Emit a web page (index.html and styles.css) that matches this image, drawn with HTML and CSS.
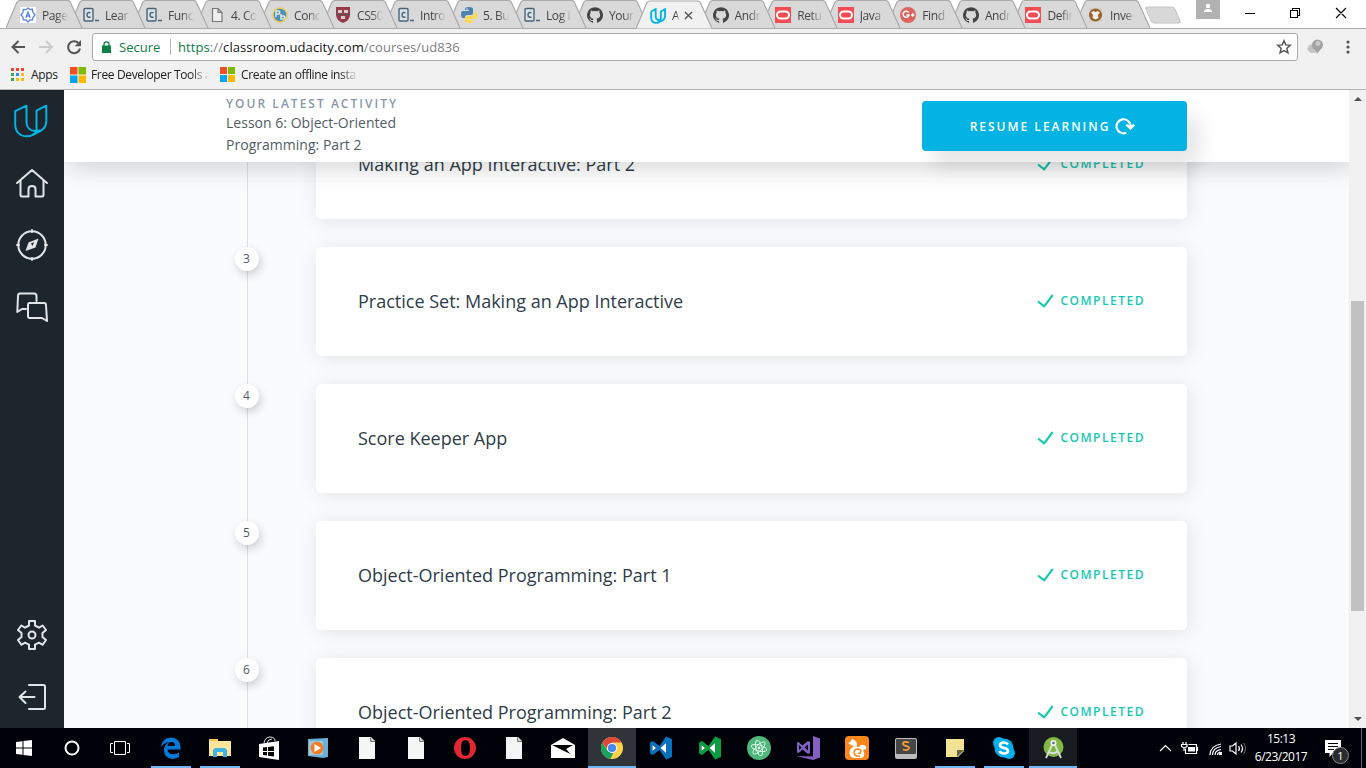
FILE: index.html
```html
<!DOCTYPE html>
<html lang="en">
<head>
<meta charset="utf-8">
<title>Android Basics</title>
<link rel="stylesheet" href="styles.css">
</head>
<body>
<svg class="defs" aria-hidden="true">
  <symbol id="tab" viewBox="0 0 77 28"><path d="M0 28 10.500 3Q11.500.5 14 .5H61.500Q63.500.5 64.500 2.500L76 28" fill="currentColor" stroke="#aaa" stroke-width="1.200"/></symbol>
  <symbol id="code" viewBox="0 0 16 16"><rect x="1" y="1.500" width="9" height="12.500" rx="1" fill="#dce3e6" stroke="#4b6478" stroke-width="1.400"/><path d="M7.500 6Q6.500 5.300 5.500 5.500 4 6 4 7.900T5.500 10.300Q6.500 10.500 7.500 9.800M12 13.500h4" fill="none" stroke="#4b6478" stroke-width="1.500"/></symbol>
  <symbol id="github" viewBox="0 0 16 16"><path fill="#444" d="M8 .2a8 8 0 0 0-2.530 15.590c.4.070.55-.17.55-.38v-1.490c-2.230.48-2.690-.95-2.690-.95-.36-.92-.89-1.170-.89-1.170-.73-.5.060-.49.060-.49.8.06 1.230.83 1.230.83.71 1.220 1.870.87 2.330.66.070-.52.28-.87.5-1.070-1.770-.2-3.640-.89-3.640-3.950 0-.88.32-1.590.83-2.150-.09-.2-.36-1.010.07-2.120 0 0 .68-.21 2.200.82a7.700 7.700 0 0 1 4 0c1.530-1.030 2.200-.82 2.200-.82.44 1.110.16 1.920.08 2.120.51.56.82 1.270.82 2.150 0 3.070-1.870 3.750-3.650 3.950.29.25.54.73.54 1.480v2.200c0 .21.150.46.550.38A8 8 0 0 0 8 .2Z"/></symbol>
  <symbol id="oracle" viewBox="0 0 16 16"><path fill="#f44c52" d="M0 0h16v16H0z"/><rect x="2" y="4.500" width="12" height="7" rx="3.500" fill="none" stroke="#fff" stroke-width="2"/></symbol>
  <symbol id="udacity" viewBox="0 0 34 34"><path d="M1.200 7.200V20C1.200 28 6 32.300 12.500 32.300Q16 32.300 19 30.800L27.500 26.300Q32.300 23 32.300 17V1.700L22.500 6.700V26.500M1.200 7.200 12.500 1.700V18.500Q13.200 26.300 20.500 27Q24 27 27.500 26.300M18.500 31Q22.500 29 22.500 26.500" fill="none" stroke="#02b3e4" stroke-width="2" stroke-linejoin="round"/></symbol>
  <symbol id="ms" viewBox="0 0 16 16"><path fill="#f25022" d="M0 0h7.500v7.500H0z"/><path fill="#7fba00" d="M8.500 0H16v7.500H8.500z"/><path fill="#00a4ef" d="M0 8.500h7.500V16H0z"/><path fill="#ffb900" d="M8.500 8.500H16V16H8.500z"/></symbol>
  <symbol id="check" viewBox="0 0 18 14"><path d="M1 7.500 7.200 12.300 15.700 1" fill="none" stroke="#15c8b4" stroke-width="2.100" stroke-linejoin="round"/></symbol>
  <symbol id="file" viewBox="0 0 16 22"><path fill="#f4f5f5" d="M0 0h12l4 4v18H0z"/><path d="M11.500.5v4H16" fill="#ccc" stroke="#777"/></symbol>
  <symbol id="vs" viewBox="0 0 24 24"><path fill="currentColor" fill-rule="evenodd" d="M1 6.500 4 5l6.500 5L17 .5l6 2.500v18L17 23.500 10.500 14 4 19l-3-1.500zM17 7l-5.500 5L17 17zM3.500 9v6L7 12z"/><path fill="#fff" d="M17 7v10l-5.500-5zM3.500 9v6L7 12z"/></symbol>
</svg>

<header class="browser">
  <div class="tabs">
    <div class="tab" style="z-index:18"><svg class="shape"><use href="#tab"/></svg><svg class="fav" viewBox="0 0 16 16"><path fill="#fff" d="M0 0h16v16H0z"/><path d="M8 1 10 2.500l2.500-.2.300 2.700L15 8l-2 2.500-.5 2.300-2.500.2-2 2-2-2-2.700-.2-.3-2.500L1 8l2-2.700.3-2.800 2.700.2zM5.800 10.800 8 5l2.200 5.800M6.500 9h3" fill="none" stroke="#5b83e0" stroke-width="1.300"/></svg><span>Page</span></div>
    <div class="tab" style="z-index:17"><svg class="shape"><use href="#tab"/></svg><svg class="fav"><use href="#code"/></svg><span>Lear</span></div>
    <div class="tab" style="z-index:16"><svg class="shape"><use href="#tab"/></svg><svg class="fav"><use href="#code"/></svg><span>Func</span></div>
    <div class="tab" style="z-index:15"><svg class="shape"><use href="#tab"/></svg><svg class="fav" viewBox="0 0 16 16"><path d="M3.500 1.500H9l4 4v9H3.500zM9 1.500v4h4" fill="#eee" stroke="#777" stroke-width="1.200"/></svg><span>4. Co</span></div>
    <div class="tab" style="z-index:14"><svg class="shape"><use href="#tab"/></svg><svg class="fav" viewBox="0 0 16 16"><circle cx="8" cy="8" r="7" fill="#4f8fc0" stroke="#e9cc55" stroke-width="1.500"/><path d="M4 10V4h3q1.500 1.500 0 3H4M9 7v5h3q1.500-1.500 0-3H9" fill="none" stroke="#dfe9e5" stroke-width="1.500"/></svg><span>Conc</span></div>
    <div class="tab" style="z-index:13"><svg class="shape"><use href="#tab"/></svg><svg class="fav" viewBox="0 0 16 16"><path fill="#963b45" d="M1 0h14v8q0 5-7 8-7-3-7-8z"/><path fill="#d8cccc" d="M3 3h4v3H3zm6 0h4v3H9zM6 9h4v3H6z"/><path d="M1 7.500h14" stroke="#555"/></svg><span>CS50</span></div>
    <div class="tab" style="z-index:12"><svg class="shape"><use href="#tab"/></svg><svg class="fav"><use href="#code"/></svg><span>Intro</span></div>
    <div class="tab" style="z-index:11"><svg class="shape"><use href="#tab"/></svg><svg class="fav" viewBox="0 0 16 16"><path fill="#4c83b1" d="M4 4V2q0-2 4-2t4 2v4q0 2-2 2H6Q4 8 4 11H2q-2 0-2-4 0-3 2-3h6V3H4z"/><path fill="#ffd756" d="M12 12v2q0 2-4 2t-4-2v-3q0-2 2-2h4q3 0 3-4h1q2 0 2 4 0 3-2 3H8v1h4z"/><circle cx="6" cy="2" r=".7" fill="#fff"/></svg><span>5. Bu</span></div>
    <div class="tab" style="z-index:10"><svg class="shape"><use href="#tab"/></svg><svg class="fav"><use href="#code"/></svg><span>Log i</span></div>
    <div class="tab" style="z-index:9"><svg class="shape"><use href="#tab"/></svg><svg class="fav"><use href="#github"/></svg><span>Your</span></div>
    <div class="tab active" style="z-index:20"><svg class="shape"><use href="#tab"/></svg><svg class="fav" viewBox="0 0 34 34"><path d="M2.500 7.500V20C2.500 27 7 31.500 13.500 31.500Q17 31.500 20 29.500L28 25.500Q32 22 32 17V2.500L23 7.500V20M2.500 7.500 12 2.500V19Q13 26 19 26 23 25 23 20" fill="none" stroke="#02b3e4" stroke-width="4"/></svg><span>A</span><svg class="close" viewBox="0 0 10 10"><path d="m1 1 8 8M9 1 1 9" stroke="#555" stroke-width="1.600"/></svg></div>
    <div class="tab" style="z-index:7"><svg class="shape"><use href="#tab"/></svg><svg class="fav"><use href="#github"/></svg><span>Andr</span></div>
    <div class="tab" style="z-index:6"><svg class="shape"><use href="#tab"/></svg><svg class="fav"><use href="#oracle"/></svg><span>Retu</span></div>
    <div class="tab" style="z-index:5"><svg class="shape"><use href="#tab"/></svg><svg class="fav"><use href="#oracle"/></svg><span>Java</span></div>
    <div class="tab" style="z-index:4"><svg class="shape"><use href="#tab"/></svg><svg class="fav" viewBox="0 0 16 16"><circle cx="8" cy="8" r="8" fill="#dd645c"/><path d="M8.700 5.700A3 3 0 1 0 9 8H6.200M11 8h3.400M12.700 6.300v3.400" fill="none" stroke="#fff" stroke-width="1.400"/></svg><span>Find</span></div>
    <div class="tab" style="z-index:3"><svg class="shape"><use href="#tab"/></svg><svg class="fav"><use href="#github"/></svg><span>Andr</span></div>
    <div class="tab" style="z-index:2"><svg class="shape"><use href="#tab"/></svg><svg class="fav"><use href="#oracle"/></svg><span>Defin</span></div>
    <div class="tab" style="z-index:1"><svg class="shape"><use href="#tab"/></svg><svg class="fav" viewBox="0 0 16 16"><path fill="#d5cfc6" d="M1 1h13v14H1z"/><circle cx="7.500" cy="8" r="6.500" fill="#986332"/><path fill="#f5eee6" d="M3 5.500 5.500 4 7.500 5 9.500 4 12 5.500 10 8l.5 3-3 1.500L4.500 11 5 8z"/></svg><span>Inve</span></div>
    <svg class="newtab" viewBox="0 0 36 18"><path d="M1 1h26q2 0 3 2l5 12q1 2-1 2H9q-2 0-3-2L1 3Q0 1 1 1Z" fill="#d8d8d8" stroke="#c4c4c4"/></svg>
    <svg class="profile" viewBox="0 0 24 19"><path fill="#b1b1b1" d="M0 0h24v19H0z"/><circle cx="12" cy="6" r="2.200" fill="#fff"/><path fill="#fff" d="M8 12v-1.200Q8.500 9 12 9t4 1.800V12z"/></svg>
    <svg class="winctl" viewBox="0 0 102 12"><path d="M0 6.500h10M45.500 3.500h7v7h-7zM47.500 3V1.500h7v7H53M91 1l10 10M101 1 91 11" fill="none" stroke="#000" stroke-width="1.100"/></svg>
  </div>
  <div class="toolbar">
    <svg class="nav" viewBox="0 0 74 16"><path d="M15 8H2.500M8.500 2l-6 6 6 6" fill="none" stroke="#555" stroke-width="2"/><path d="M29 8h12M36 2l6 6-6 6" fill="none" stroke="#ccc" stroke-width="2"/><path d="M68.500 4A6 6 0 1 0 70 9.500" fill="none" stroke="#555" stroke-width="2"/><path d="M71 1v6.300h-6.300z" fill="#555"/></svg>
    <div class="omnibox">
      <svg class="lock" viewBox="0 0 9 12"><path fill="#0b8043" d="M0 4.500h9V12H0z"/><path d="M2 5V3.300a2.500 2.500 0 0 1 5 0V5" fill="none" stroke="#0b8043" stroke-width="1.300"/></svg>
      <span class="secure">Secure</span><i></i>
      <span class="url"><em>https</em>://<b>classroom.udacity.com</b>/courses/ud836</span>
      <svg class="star" viewBox="0 0 16 16"><path d="m8 1.800 1.800 4.100 4.500.4-3.400 3 1 4.500L8 11.500l-3.900 2.300 1-4.500-3.400-3 4.500-.4z" fill="none" stroke="#555" stroke-width="1.500"/></svg>
    </div>
    <svg class="ext" viewBox="0 0 18 16"><ellipse cx="6" cy="9.500" rx="5.500" ry="4.500" fill="#c4c4c4"/><path fill="#a2a2a2" d="M5 6A5.500 5.500 0 0 1 16 6q0 3-3 5l-3 4q0-3-3-5-2-1-2-4z"/><circle cx="11" cy="4.500" r="2.500" fill="#c9c9c9"/></svg>
    <svg class="more" viewBox="0 0 4 14"><g fill="#555"><circle cx="2" cy="2" r="1.600"/><circle cx="2" cy="7" r="1.600"/><circle cx="2" cy="12" r="1.600"/></g></svg>
  </div>
  <div class="bookmarks">
    <svg class="apps" viewBox="0 0 13 13"><path fill="#ea4335" d="M0 0h3v3H0zM5 0h3v3H5zM10 0h3v3h-3z"/><path fill="#34a853" d="M0 5h3v3H0zM0 10h3v3H0z"/><path fill="#4285f4" d="M5 5h3v3H5z"/><path fill="#fbbc05" d="M10 5h3v3h-3zM5 10h3v3H5zM10 10h3v3h-3z"/></svg>
    <span class="apps-label">Apps</span>
    <svg class="bm"><use href="#ms"/></svg><span class="fade one">Free Developer Tools a</span>
    <svg class="bm small"><use href="#ms"/></svg><span class="fade two">Create an offline insta</span>
  </div>
</header>

<div class="page">
  <nav class="sidebar">
    <svg class="logo"><use href="#udacity"/></svg>
    <svg viewBox="0 0 32 32"><path d="M1 16 16 3l15 13M4.500 13.500V28q0 1.500 1.500 1.500h6.500V22q0-3 3.500-3t3.500 3v7.500H26q1.500 0 1.500-1.500V13.500"/></svg>
    <svg viewBox="0 0 32 32"><circle cx="16" cy="16" r="13.700"/><path d="M16 1v2M16 29v2M1 16h2M29 16h2"/><path class="solid" fill-rule="evenodd" d="m9.500 22 3-8.500 10-4-3 9zM15 14.500 16.500 17l1.500-4z"/></svg>
    <svg viewBox="0 0 32 32"><path d="M20.500 10V5Q20.500 2.500 18 2.500H4Q2 2.500 2 5L1.300 21 6 18h4"/><path d="M13.500 12H28Q30 12 30 14L31 30l-5-3H13.500q-1.500 0-1.500-2V14q0-2 1.500-2z"/></svg>
    <svg class="gear" viewBox="0 0 32 32"><path d="M13 2h6v4.500l4 2.200 3.700-2.200 3.300 4.500-3.500 3v4l3.500 3-3.300 4.800L23 23.700l-4 2V30h-6v-4.300l-4-2-3.700 2.100L2 21l3.500-3v-4L2 11l3.300-4.500L9 8.700l4-2.200z"/><circle cx="16" cy="16" r="3.500"/></svg>
    <svg viewBox="0 0 32 32"><path d="M13 4h14.500q1.500 0 1.500 1.500v21q0 1.500-1.500 1.500H13M18.500 16H3.500M9.500 10.500 3.500 16l6 6"/></svg>
  </nav>
  <main class="content">
    <div class="activity">
      <div class="latest"><h2>YOUR LATEST ACTIVITY</h2><p>Lesson 6: Object-Oriented<br>Programming: Part 2</p></div>
      <button class="resume"><span>RESUME LEARNING</span><svg viewBox="0 0 20 18"><path d="M11.300 15.700A7 7 0 1 1 15.500 9" fill="none" stroke="#fff" stroke-width="2.200"/><path d="m10.500 8.500 5 4.500L20 8.500 18.500 7l-3 2-3.500-2z" fill="#fff"/></svg></button>
    </div>
    <ol class="lessons">
      <li><b></b><article><h3>Making an App Interactive: Part 2</h3><span class="done"><svg><use href="#check"/></svg>COMPLETED</span></article></li>
      <li><b>3</b><article><h3>Practice Set: Making an App Interactive</h3><span class="done"><svg><use href="#check"/></svg>COMPLETED</span></article></li>
      <li><b>4</b><article><h3>Score Keeper App</h3><span class="done"><svg><use href="#check"/></svg>COMPLETED</span></article></li>
      <li><b>5</b><article><h3>Object-Oriented Programming: Part 1</h3><span class="done"><svg><use href="#check"/></svg>COMPLETED</span></article></li>
      <li><b>6</b><article><h3>Object-Oriented Programming: Part 2</h3><span class="done"><svg><use href="#check"/></svg>COMPLETED</span></article></li>
    </ol>
  </main>
  <div class="scrollbar">
    <svg viewBox="0 0 8 4"><path d="M0 4 4 0l4 4z" fill="#505050"/></svg>
    <div class="thumb"></div>
    <svg viewBox="0 0 8 4"><path d="M0 0h8L4 4z" fill="#505050"/></svg>
  </div>
</div>

<footer class="taskbar">
  <div class="start"><svg width="16" height="16" viewBox="0 0 16 16"><path fill="#fff" d="m0 2 6.500-.8v6.300H0zM7.500 1 16 0v7.500H7.500zM0 8.500h6.500v6.300L0 14zM7.500 8.500H16V16l-8.500-1z"/></svg></div>
  <div class="start"><svg width="16" height="16" viewBox="0 0 16 16"><circle cx="8" cy="8" r="6.500" fill="none" stroke="#fff" stroke-width="2"/></svg></div>
  <div class="start"><svg width="20" height="14" viewBox="0 0 20 14"><path d="M4.500.5h11v13h-11zM3 2.500H.5v9H3M17 2.500h2.500v9H17" fill="none" stroke="#fff"/></svg></div>
  <div class="app open edge"><svg width="22" height="22" viewBox="0 0 22 22"><path fill="#0078d7" d="M1 10Q2 1 11 .5 20 1 20.500 10v2.500H7.500Q8 17 13 17.200q3.500 0 6-1.700v4.500Q16 22 12 22 4 21 4 13q0-5 5-8Q3.500 6 1 10zm6.500-1H15q0-4-3.500-4T7.500 9z"/></svg></div>
  <div class="app open"><svg width="22" height="20" viewBox="0 0 22 20"><path fill="#f5c84c" d="M0 1h9v4H0z"/><path fill="#ffe59a" d="M0 3h22v15H0z"/><path fill="#3db4e5" d="M4 19v-7l2-2h10l2 2v7h-4v-5H8v5z"/></svg></div>
  <div class="app"><svg width="22" height="24" viewBox="0 0 22 24"><path d="M6 7Q7 1 12 1t5 4M9 7q1-4 5-4" fill="none" stroke="#ddd"/><path fill="#fff" d="m1 8 20-3v19L1 21z"/><path fill="#000" d="m5 11.500 4-.5v4H5zM10 11l6-.8V15h-6zM5 16h4v3.500l-4-.5zM10 16h6v4.500l-6-.8z"/></svg></div>
  <div class="app"><svg width="20" height="20" viewBox="0 0 20 20"><path fill="#69b2d5" d="m0 1 20-1v19l-5 1L0 18z"/><path fill="#a5c6d6" d="M1 3h14v14H1z"/><circle cx="9" cy="10" r="6.300" fill="#f57b22"/><path fill="#fff" d="M6.500 6 13 10l-6.500 4z"/></svg></div>
  <div class="app"><svg width="16" height="22"><use href="#file"/></svg></div>
  <div class="app"><svg width="16" height="22"><use href="#file"/></svg></div>
  <div class="app"><svg width="22" height="22" viewBox="0 0 22 22"><path fill="#e32632" fill-rule="evenodd" d="M11 0a11 11 0 1 0 0 22 11 11 0 1 0 0-22zm.5 3C15 3 16 7 16 11s-1 8-4.500 8S7 15 7 11s1-8 4.500-8z"/></svg></div>
  <div class="app"><svg width="16" height="22"><use href="#file"/></svg></div>
  <div class="app"><svg width="24" height="20" viewBox="0 0 24 20"><path fill="#fff" d="M0 7 12 0l12 7v13H0z"/><path fill="#000" d="M1 7h21l-7 4 4.500 5L11 12z"/></svg></div>
  <div class="app open wide chrome"><svg width="22" height="22" viewBox="0 0 22 22"><circle cx="11" cy="11" r="11" fill="#ffd24d"/><path fill="#df473a" d="M1.500 5.500a11 11 0 0 1 19 0H11L6 12z"/><path fill="#19a15f" d="M1.500 5.500 6.300 13.500l6 2.500-3 6A11 11 0 0 1 1.500 5.500z"/><circle cx="11" cy="11" r="5" fill="#fff"/><circle cx="11" cy="11" r="4.100" fill="#4587f3"/></svg></div>
  <div class="app blue"><svg width="24" height="24"><use href="#vs"/></svg></div>
  <div class="app green"><svg width="24" height="24"><use href="#vs"/></svg></div>
  <div class="app"><svg width="24" height="24" viewBox="0 0 24 24"><circle cx="12" cy="12" r="12" fill="#4eb77a"/><g fill="none" stroke="#e8fff0" stroke-width=".9"><ellipse cx="12" cy="12" rx="8" ry="3" transform="rotate(15 12 12)"/><ellipse cx="12" cy="12" rx="8" ry="3" transform="rotate(75 12 12)"/><ellipse cx="12" cy="12" rx="8" ry="3" transform="rotate(135 12 12)"/></g><circle cx="12" cy="12" r="1.300" fill="#fff"/></svg></div>
  <div class="app"><svg width="24" height="24" viewBox="0 0 24 24"><path fill="#865fc5" fill-rule="evenodd" d="m17 0 7 2.500v19L17 24 0 20l17 .5zM1 6.500 2.500 6l4 3.500L12 5l2 1v11l-2 1-5.500-4.500-4 3.500L1 16.500zM3 9v5l2.500-2.500zM12 8.500 8.500 11.500l3.500 3z"/></svg></div>
  <div class="app"><svg width="24" height="24" viewBox="0 0 24 24"><rect width="24" height="24" rx="4" fill="#ff861b"/><path fill="#fff" d="M3 7q3-1 4-4 5 1 5 6-1 2 2 2 1-3 5-2 3 1 2 4l-3 1q3 5-1 8H8q-5-3-3-8 2-3 4-4-3 0-6-3z"/><path d="M15 20q-5 1-6-3 0-4 4-4 3 0 3 3-1 2-3 1" fill="none" stroke="#ff861b" stroke-width="1.500"/></svg></div>
  <div class="app"><svg width="22" height="21" viewBox="0 0 22 21"><rect width="22" height="21" rx="2" fill="#bcbcbc"/><rect x="1" y="1" width="20" height="15" rx="1" fill="#464646"/><path d="M14 4.500Q8 3 8 5.500 8 7.300 11 8q3.500.5 3 2.500-1 2.500-6 1" fill="none" stroke="#ff9b35" stroke-width="1.800"/></svg></div>
  <div class="app open"><svg width="18" height="18" viewBox="0 0 18 18"><path fill="#f2e394" d="M0 0h18v12l-6 6H0z"/><path fill="#67644c" d="M11 11h7l-7 7z"/></svg></div>
  <div class="app open"><svg width="22" height="22" viewBox="0 0 22 22"><circle cx="11" cy="11" r="9.500" fill="#00aff0"/><circle cx="6" cy="6" r="6" fill="#00aff0"/><circle cx="16" cy="16" r="6" fill="#00aff0"/><path d="M15 7.500Q13.500 5.500 11 5.500q-4 0-4 2.800 0 2 4 2.700t4 3Q15 16.500 11 16.500q-3.500 0-4.500-2.500" fill="none" stroke="#fff" stroke-width="2.600"/></svg></div>
  <div class="app open wide studio"><svg width="22" height="24" viewBox="0 0 22 24"><circle cx="11.500" cy="11" r="10" fill="#82b944"/><path d="M10.500 8 4 22M12.500 8 19 22M7 16q4.500 3 9-1" fill="none" stroke="#d8dfdc" stroke-width="1.800"/><circle cx="11.500" cy="7" r="3" fill="#eee"/><circle cx="11.500" cy="7" r="1.300" fill="#607078"/></svg></div>
  <div class="tray">
    <svg width="88" height="16" viewBox="0 0 88 16"><g fill="none" stroke="#fff" stroke-width="1.200"><path d="m1 11 5.500-5.500L12 11"/><path d="M29.500 4.500h8v9h-11v-5M38.500 7v4M24 2v2M27 2v2M22.500 4.500h5.500v2q-2.500 2-5.500 0zM25 8v3"/><path d="M51 15q0-9 11-11M53.500 15q0-7 8.500-8.500M56 15q0-4.500 6-5.500M58.500 15q0-2.500 3-3"/><path d="M71 6h2.500L77 3v11l-3.500-3H71zM79.500 6q2 2.500 0 5M82 4.500q3 4 0 8"/></g><path fill="#fff" d="M29 7h7v4.500h-7zM60 12h3v3h-3z"/><path d="M84.500 3q4 5.500 0 11" fill="none" stroke="#777"/></svg>
    <div class="clock"><span>15:13</span><span>6/23/2017</span></div>
    <div class="notice"><svg width="16" height="17" viewBox="0 0 16 17"><path fill="#fff" d="M0 0h16v13H8l-3.500 4v-4H0z"/><path d="M3 3.500h10M3 6.500h10M3 9.500h6" stroke="#000"/></svg><span>1</span></div>
    <i class="peek"></i>
  </div>
</footer>
</body>
</html>
```

FILE: styles.css
```css
* { box-sizing: border-box; }
body { margin: 0; width: 1366px; height: 768px; overflow: hidden; display: flex; flex-direction: column; font-family: "Open Sans", "Noto Sans", sans-serif; }
svg { display: block; flex: none; }
.defs { position: absolute; width: 0; height: 0; }

.browser { height: 90px; background: #f1f1f1; border-bottom: 1px solid #b5b5b5; flex: none; }
.tabs { display: flex; height: 29px; background: #fff; padding-left: 6px; border-bottom: 1px solid #aaa; isolation: isolate; }
.tab { position: relative; width: 77px; height: 28px; margin-right: -14px; flex: none; display: flex; align-items: center; padding: 2px 0 0 14px; color: #d9d9d9; }
.tab:nth-child(n+11) { margin-right: -14.430px; }
.tab.active { color: #f1f1f1; height: 29px; }
.shape { position: absolute; left: 0; top: 0; width: 77px; height: 28px; }
.active .shape { height: 29px; }
.fav { position: relative; width: 16px; height: 16px; }
.tab span { position: relative; margin-left: 6px; width: 26px; overflow: hidden; white-space: nowrap; font-size: 12px; letter-spacing: -.4px; color: #444; -webkit-mask-image: linear-gradient(90deg, #000 55%, transparent); mask-image: linear-gradient(90deg, #000 55%, transparent); }
.tab.active span { width: 8px; }
.close { position: relative; width: 9px; height: 9px; margin-left: 4px; }
.newtab { width: 36px; height: 18px; margin: 6px 0 0 8px; }
.profile { width: 24px; height: 19px; margin-left: 15px; }
.winctl { width: 102px; height: 12px; margin: 7px 0 0 25px; }

.toolbar { height: 36px; display: flex; align-items: center; padding: 0 16px 0 10px; }
.nav { width: 74px; height: 16px; }
.omnibox { width: 1206px; height: 28px; margin-left: 8px; border: 1px solid #a9a9a9; border-radius: 3px; background: #fff; display: flex; align-items: center; font-size: 13px; padding: 0 5px 0 9px; }
.lock { width: 9px; height: 12px; }
.secure { margin-left: 8px; color: #0b8043; width: 42px; white-space: nowrap; }
.omnibox i { width: 1px; height: 16px; background: #b5b5b5; margin: 0 7px 0 9px; }
.url { color: #808080; white-space: nowrap; letter-spacing: .09px; }
.url em { font-style: normal; color: #0b8043; }
.url b { font-weight: 400; color: #111; }
.star { width: 16px; height: 16px; margin-left: auto; }
.ext { width: 18px; height: 16px; margin-left: 9px; }
.more { width: 4px; height: 14px; margin-left: auto; }
.bookmarks { height: 19px; display: flex; align-items: center; font-size: 12px; color: #222; padding-left: 11px; white-space: nowrap; }
.apps { width: 13px; height: 13px; }
.apps-label { margin-left: 7px; width: 27px; letter-spacing: -.3px; }
.bm { width: 16px; height: 16px; margin-left: 12px; }
.bm.small { width: 15px; height: 15px; margin-left: 11px; }
.fade { overflow: hidden; margin-left: 5px; letter-spacing: -.35px; -webkit-mask-image: linear-gradient(90deg, #000 85%, transparent); mask-image: linear-gradient(90deg, #000 85%, transparent); }
.one { width: 118px; }
.two { width: 117px; margin-left: 6px; }

.page { height: 638px; display: flex; flex: none; }
.sidebar { width: 64px; background: #1e262d; display: flex; flex-direction: column; align-items: center; padding: 14px 0 15px; }
.sidebar svg { width: 32px; height: 32px; fill: none; stroke: #e2e5e8; stroke-width: 2; stroke-linecap: round; stroke-linejoin: round; margin-bottom: 30px; }
.sidebar .logo { width: 34px; height: 34px; margin: 0 2px 29px 0; }
.sidebar .gear { margin-top: auto; }
.sidebar svg:last-child { margin-bottom: 0; }
.sidebar .solid { fill: #e2e5e8; stroke: none; }
.content { width: 1285px; background: #fafbfd; overflow: hidden; }
.activity { position: relative; z-index: 2; height: 72px; background: #fff; display: flex; justify-content: space-between; padding: 0 162px; box-shadow: 4px 8px 22px rgba(0,0,0,.15); }
.latest h2 { margin: 4px 0 0; font-size: 12px; line-height: 20px; font-weight: 600; letter-spacing: 2.020px; color: #8797ad; }
.latest p { margin: -2px 0 0; font-size: 14px; line-height: 22px; color: #525c65; letter-spacing: .02px; }
.resume { width: 265px; height: 50px; margin-top: 11px; border: 0; border-radius: 4px; background: #02b3e4; color: #fff; box-shadow: 12px 15px 20px rgba(0,0,0,.1); font: 600 12px "Open Sans", sans-serif; letter-spacing: 2px; display: flex; align-items: center; justify-content: center; gap: 5px; padding: 0 4px 0 0; }
.resume svg { width: 20px; height: 18px; }
.lessons { list-style: none; margin: -52px 0 0; padding: 0 162px 0 171px; background: linear-gradient(#dcdfe3, #dcdfe3) 183px 0 / 1px 100% no-repeat; }
.lessons li { display: flex; justify-content: space-between; margin-bottom: 28px; }
.lessons b { width: 24px; height: 24px; border-radius: 50%; background: #fff; box-shadow: 2px 4px 10px rgba(0,0,0,.18); font-size: 12px; line-height: 24px; text-align: center; font-weight: 400; color: #525c65; padding-right: 1px; }
article { width: 871px; height: 109px; background: #fff; border-radius: 5px; box-shadow: 2px 2px 20px rgba(0,0,0,.1); display: flex; align-items: center; justify-content: space-between; padding: 0 42px 2px; }
h3 { margin: 0; font-size: 18px; font-weight: 400; color: #2e3d49; }
.done { display: flex; align-items: center; gap: 6px; font-size: 12px; font-weight: 600; letter-spacing: 1.500px; color: #15c8b4; }
.done svg { width: 18px; height: 14px; }
.scrollbar { width: 17px; background: #f1f1f1; display: flex; flex-direction: column; align-items: center; padding: 7px 0; }
.scrollbar svg { width: 8px; height: 4px; }
.thumb { width: 13px; height: 310px; background: #c1c1c1; margin: 200px 0 auto; }

.taskbar { height: 40px; background: #00020a; display: flex; flex: none; color: #fff; }
.start { width: 48px; display: grid; place-items: center; }
.app { width: 40px; margin-right: 9px; display: grid; place-items: center; flex: none; }
.edge { margin-left: 7px; }
.open { border-bottom: 2px solid #73b5fa; padding-top: 2px; }
.wide { width: 48px; margin-left: -4px; margin-right: 5px; }
.chrome { background: #303438; }
.studio { background: #181c20; }
.blue { color: #0871be; }
.green { color: #0a9c40; }
.tray { margin-left: auto; display: flex; align-items: center; }
.clock { width: 62px; margin-left: 3px; display: flex; flex-direction: column; align-items: center; font-size: 12px; line-height: 18px; letter-spacing: -.5px; white-space: nowrap; }
.notice { position: relative; width: 36px; height: 40px; padding: 12px 0 0 13px; }
.notice span { position: absolute; left: 20px; top: 19px; width: 17px; height: 17px; border: 1px solid #888; border-radius: 50%; background: #292b2f; font-size: 11px; line-height: 15px; text-align: center; }
.peek { width: 1px; height: 40px; background: #666; margin: 0 4px 0 13px; }
```
